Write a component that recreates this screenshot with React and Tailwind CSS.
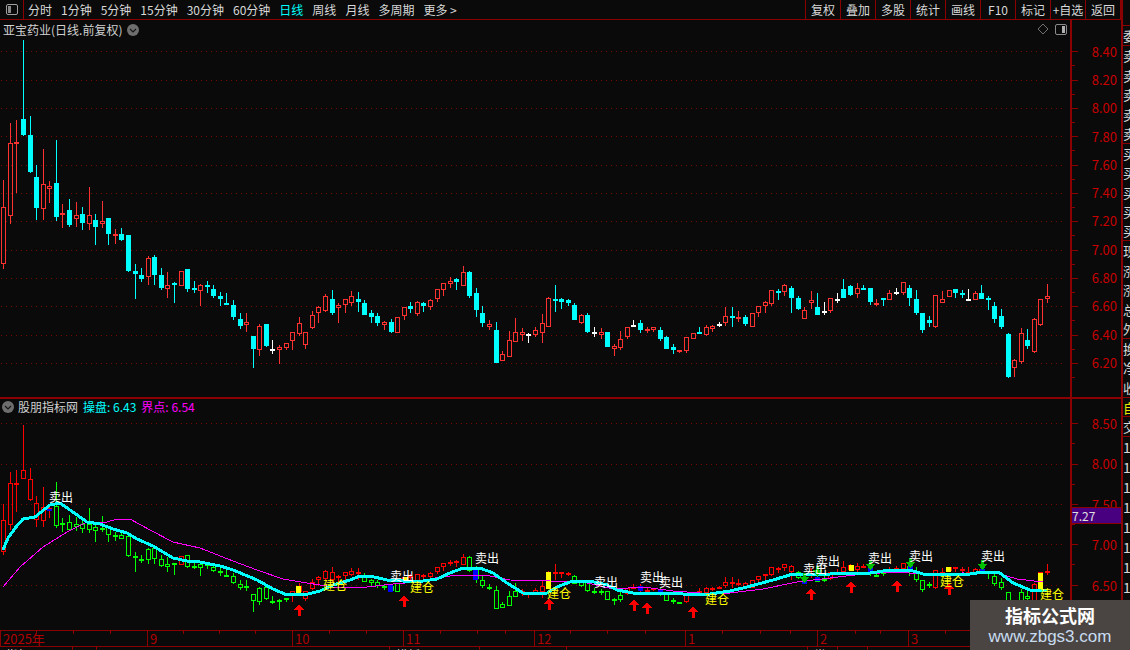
import React from 'react';

const CJK = { fontFamily: '"Noto Sans CJK SC", "Liberation Sans", sans-serif' };

// [type, bodyTop, bodyBottom, wickTop, wickBottom] in screen pixels, r = up, c = down, w = flat
const K = [
  ['r',207,264,180,269],['r',143,216,123,224],['r',142,144,120,193],['c',119,135,40,136],['c',135,172,116,173],
  ['c',177,208,165,220],['r',184,209,149,220],['r',186,189,181,203],['c',183,217,140,221],['r',213,215,204,228],
  ['c',210,225,199,227],['r',215,219,202,227],['c',214,223,207,230],['r',215,224,187,230],['c',220,227,214,245],
  ['r',221,224,201,228],['c',218,234,218,245],['r',234,235,229,244],['c',234,240,228,241],['c',235,271,235,272],
  ['c',271,274,264,299],['c',275,279,268,282],['r',258,277,256,285],['c',257,275,255,285],['c',275,288,268,290],
  ['r',285,289,272,298],['c',283,285,282,303],['r',271,286,271,286],['c',269,289,269,292],['c',288,289,281,293],
  ['r',285,291,284,306],['c',285,286,281,293],['c',289,296,285,298],['c',296,299,292,306],['c',303,304,293,305],
  ['c',305,317,300,320],['c',319,326,313,329],['r',322,325,313,332],['c',336,349,336,368],['r',326,350,324,356],
  ['c',324,346,324,347],['w',349,350,340,354],['r',347,350,345,364],['r',343,348,343,350],['r',332,341,332,350],
  ['r',323,334,317,336],['r',332,345,332,349],['r',315,328,311,329],['r',307,313,306,323],['r',296,311,294,312],
  ['c',299,313,290,315],['r',305,308,303,323],['r',299,305,299,313],['r',296,303,291,306],['c',299,302,292,312],
  ['c',303,315,300,315],['c',313,317,310,323],['c',316,323,313,326],['r',322,325,321,330],['c',322,332,319,333],
  ['r',317,333,317,333],['r',307,316,307,320],['c',306,309,302,313],['r',302,314,301,316],['c',303,306,302,312],
  ['r',300,307,299,310],['r',289,299,289,302],['r',283,290,283,296],['r',281,284,277,288],['c',279,282,278,290],
  ['r',272,286,266,286],['c',272,296,271,298],['c',293,310,288,317],['c',313,323,306,327],['r',324,327,320,330],
  ['c',330,363,322,363],['r',354,361,351,361],['r',340,357,331,357],['r',332,342,318,342],['r',332,335,328,341],
  ['w',334,335,333,343],['r',330,335,327,337],['r',323,333,314,343],['r',298,327,297,327],['c',299,300,285,312],
  ['c',299,302,298,309],['c',300,303,299,306],['c',305,320,303,320],['r',315,323,314,324],['c',315,332,313,333],
  ['w',332,333,327,337],['r',332,335,328,339],['c',332,347,332,347],['r',346,349,344,356],['r',339,348,331,350],
  ['r',327,337,327,339],['w',325,326,320,327],['c',323,330,320,333],['r',329,330,327,333],['r',327,330,327,332],
  ['c',330,339,327,341],['c',337,349,336,349],['c',347,350,344,354],['r',350,351,350,353],['r',337,351,337,353],
  ['r',333,339,333,339],['c',332,333,327,334],['r',327,335,325,336],['r',326,329,325,332],['w',324,325,322,327],
  ['r',316,323,307,326],['c',316,317,307,327],['r',317,319,311,322],['c',317,324,315,326],['r',313,327,313,327],
  ['r',306,313,306,317],['r',302,306,301,313],['r',290,304,290,306],['c',291,292,289,300],['r',285,292,284,296],
  ['c',288,298,286,313],['c',298,309,296,310],['r',310,319,307,319],['r',300,303,291,309],['c',307,315,293,315],
  ['w',311,312,302,315],['r',298,311,298,313],['w',299,300,293,303],['c',289,298,279,298],['c',286,295,285,296],
  ['r',288,294,283,298],['c',288,290,285,290],['c',288,302,288,305],['r',303,305,299,306],['c',298,299,298,306],
  ['r',293,300,290,300],['w',292,293,288,295],['r',282,293,282,295],['c',288,298,285,306],['c',299,313,290,315],
  ['c',313,330,313,333],['c',320,323,316,327],['r',295,327,295,328],['r',299,303,291,303],['r',290,297,290,297],
  ['c',289,293,289,298],['c',293,295,290,298],['w',299,300,289,300],['r',293,300,291,300],['c',293,299,285,299],
  ['c',298,300,296,310],['c',306,319,302,323],['c',316,327,309,329],['c',334,377,333,378],['r',360,368,359,377],
  ['r',333,362,328,364],['c',340,346,329,349],['r',319,352,318,353],['r',299,325,299,326],['r',296,299,284,303],
];

const OP_LINE = [[3,550],[8,538],[16,527],[23,519],[35,517],[50,505],[60,503],[70,510],[87,522],[100,524],[113,529],[127,533],[137,539],[153,546],[173,558],[187,561],[200,562],[220,566],[233,570],[257,580],[273,589],[287,595],[308,594],[320,591],[333,585],[350,580],[360,576],[370,576],[387,580],[403,581],[423,581],[437,579],[450,573],[463,568],[480,568],[493,573],[507,583],[523,593],[547,593],[557,587],[570,582],[590,581],[607,585],[617,590],[633,593],[660,593],[683,594],[703,595],[730,591],[747,587],[773,580],[793,574],[830,574],[870,573],[890,570],[910,570],[923,574],[970,574],[983,572],[1000,573],[1013,583],[1030,590],[1047,591]];
const JD_LINE = [[3,587],[20,567],[43,547],[67,532],[87,522],[107,522],[117,519],[130,519],[150,530],[173,542],[200,548],[233,561],[257,570],[283,579],[307,583],[333,587],[350,587],[367,587],[393,584],[417,582],[440,577],[460,575],[490,576],[510,580],[550,581],[583,582],[613,589],[643,587],[673,591],[700,593],[730,593],[763,589],[797,582],[830,578],[863,574],[897,572],[920,574],[963,573],[1000,574],[1017,579],[1043,582]];

const SELL = [[61,497],[402,576],[487,558],[606,582],[652,577],[671,582],[815,569],[828,561],[880,558],[921,556],[993,556]];
const BUY = [[335,585],[422,587],[559,593],[717,599],[952,581],[1052,594]];
const UP_ARROWS = [[299,610],[404,601],[549,604],[634,605],[647,608],[693,612],[811,594],[851,587],[897,586],[949,589]];
const DOWN_ARROWS = [[804,578],[817,571],[870,565],[910,563],[982,565]];
const YELLOW = [[296,586,5,8],[546,572,5,17],[403,577,5,4],[849,565,5,6],[946,567,5,5],[1038,573,5,17],[895,569,5,2]];
const BLUE = [[388,585,5,7],[473,569,5,11],[638,586,5,5],[658,590,5,5],[47,509,5,2],[802,579,5,5],[815,577,5,4],[868,566,5,6],[908,566,5,4],[980,569,5,2]];

const TOP_GRID = [51.5,80,108,136,165,193,221,250,278,306,335,363];
const LOW_GRID = [423,464,504,544,585];
const TOP_LABELS = ['8.40','8.20','8.00','7.80','7.60','7.40','7.20','7.00','6.80','6.60','6.40','6.20'];
const LOW_LABELS = ['8.50','8.00','7.50','7.00','6.50'];

const TOOLS = ['1分钟','5分钟','15分钟','30分钟','60分钟'];
const TOOLS2 = ['周线','月线','多周期'];
const BUTTONS = ['复权','叠加','多股','统计','画线','F10','标记','+自选','返回'];
const TIME = [['2025年',147],['9',145],['10',111],['11',131],['12',151],['1',132],['2',91],['3',213]];
const MINOR = [36,73,110,183,219,255,329,366,440,477,505,570,607,645,722,760,790,855,880,945,980,1015,1050];
const SIDE = ['卖','卖','卖','卖','卖','买','买','买','买','买','现','涨','涨','总','外','换','净','收'];

const px = (n) => Math.round(3.3 + 6.564 * n);
const lowY = (y) => Math.round(431.1 + (y - 51.5) * 0.5712);
const lineAt = (x) => {
  for (let i = 1; i < OP_LINE.length; i++) {
    const [x0, y0] = OP_LINE[i - 1];
    const [x1, y1] = OP_LINE[i];
    if (x <= x1) return y0 + ((x - x0) / (x1 - x0)) * (y1 - y0);
  }
  return 591;
};
const points = (list) => list.map((p) => p.join(',')).join(' ');

const Candle = ({ x, top, bot, hi, lo, color, solid }) => {
  const h = bot - top;
  return (
    <g>
      <rect x={x} y={hi} width="1" height={Math.max(top - hi, 0)} fill={color} />
      <rect x={x} y={bot} width="1" height={Math.max(lo - bot, 0)} fill={color} />
      {solid || h <= 2 ? (
        <rect x={x - 2} y={top} width="5" height={Math.max(h, 2)} fill={color} />
      ) : (
        <rect x={x - 1.5} y={top + 0.5} width="4" height={h - 1} fill="none" stroke={color} />
      )}
    </g>
  );
};

const PriceCandles = () =>
  K.map(([t, a, b, hi, lo], i) => (
    <Candle
      key={i}
      x={px(i)}
      top={a}
      bot={b}
      hi={hi}
      lo={lo}
      solid={t === 'c' || t === 'w'}
      color={t === 'r' ? '#ff3232' : t === 'c' ? '#00ffff' : '#ffffff'}
    />
  ));

const IndicatorCandles = () =>
  K.map(([t, a, b, hi, lo], i) => {
    const close = lowY(t === 'c' ? b : a);
    return (
      <Candle
        key={i}
        x={px(i)}
        top={lowY(a)}
        bot={lowY(b)}
        hi={lowY(hi)}
        lo={lowY(lo)}
        color={i < 8 || close < lineAt(px(i)) ? '#ff0000' : '#00ff00'}
      />
    );
  });

const Grid = ({ rows }) =>
  rows.map((y) => (
    <line key={y} x1="1" x2="1066" y1={Math.floor(y) + 0.5} y2={Math.floor(y) + 0.5} stroke="#7a0000" strokeDasharray="1 4" />
  ));

const ChevronDot = () => (
  <svg width="12" height="12" viewBox="0 0 12 12" className="shrink-0">
    <circle cx="6" cy="6" r="6" fill="#6e6e6e" />
    <path d="M3 5l3 3 3-3" fill="none" stroke="#161616" strokeWidth="1.2" />
  </svg>
);

const PanelIcon = () => (
  <svg width="12" height="11" viewBox="0 0 12 11">
    <rect x="0.5" y="0.5" width="11" height="10" rx="1.5" fill="none" stroke="#8a8a8a" />
    <rect x="7" y="2" width="3" height="7" fill="#b0b0b0" />
  </svg>
);

// axis labels sit in flow, one row per grid step
const Axis = ({ labels, step, pad }) => (
  <div className="flex flex-col items-end pr-[4px] text-[13px] text-[#c80000]" style={{ paddingTop: pad }}>
    {labels.map((l) => (
      <div key={l} className="flex items-center leading-none" style={{ height: step }}>{l}</div>
    ))}
  </div>
);

const AxisTicks = ({ rows, offset, height, step }) => (
  <svg className="absolute left-0 top-0" width="8" height={height}>
    {rows.map((y) => (
      <g key={y}>
        <rect x="0" y={Math.floor(y - offset)} width="6" height="1" fill="#8b0000" />
        <rect x="0" y={Math.floor(y - offset + step / 2)} width="3" height="1" fill="#8b0000" />
      </g>
    ))}
  </svg>
);

const App = () => (
  <div className="flex h-[650px] w-[1130px] overflow-hidden bg-[#0a0a0a]" style={CJK}>
    <div className="flex w-[1121px] shrink-0 flex-col">
      {/* Toolbar */}
      <div className="flex h-[20px] shrink-0 items-center border-b border-[#8b0000] text-[12px] text-[#d8d8d8]">
        <div className="flex h-full w-[24px] items-center justify-center border-r border-[#8b0000]">
          <svg width="12" height="11" viewBox="0 0 12 11">
            <rect x="0.5" y="0.5" width="11" height="10" rx="1.5" fill="none" stroke="#a0a0a0" />
            <rect x="2" y="2" width="3" height="7" fill="#8a8a8a" />
          </svg>
        </div>
        <div className="ml-[4px] flex items-center gap-[9px]">
          <span>分时</span>
          {TOOLS.map((t) => <span key={t}>{t}</span>)}
          <span className="text-[#00ffff]">日线</span>
          {TOOLS2.map((t) => <span key={t}>{t}</span>)}
          <span>更多 &gt;</span>
        </div>
        <div className="ml-auto flex h-full items-stretch">
          {BUTTONS.map((b) => (
            <div key={b} className="flex w-[35px] items-center justify-center border-l border-[#8b0000]">{b}</div>
          ))}
          <div className="w-px bg-[#8b0000]" />
        </div>
      </div>

      {/* Price panel */}
      <div className="flex h-[377px] shrink-0">
        <div className="relative w-[1070px] shrink-0">
          <svg width="1070" height="377" viewBox="0 20 1070 377" shapeRendering="crispEdges" className="block">
            <Grid rows={TOP_GRID} />
            <PriceCandles />
          </svg>
          <div className="absolute left-[3px] top-0 flex h-[19px] items-center gap-[5px] text-[12px] text-[#d0d0d0]">
            <span>亚宝药业(日线.前复权)</span>
            <ChevronDot />
          </div>
          <div className="absolute right-[3px] top-[3px] flex items-center gap-[6px]">
            <svg width="12" height="12" viewBox="0 0 12 12">
              <path d="M6 1l5 5-5 5-5-5z" fill="none" stroke="#707070" />
            </svg>
            <PanelIcon />
          </div>
        </div>
        <div className="relative flex-1 border-l-2 border-[#8b0000]">
          <AxisTicks rows={TOP_GRID} offset={20} height={377} step={28.3} />
          <Axis labels={TOP_LABELS} step="28.3px" pad="17px" />
        </div>
      </div>

      {/* Indicator panel */}
      <div className="flex h-[233px] shrink-0 border-t-2 border-[#8b0000]">
        <div className="relative w-[1070px] shrink-0">
          <svg width="1070" height="231" viewBox="0 399 1070 231" shapeRendering="crispEdges" className="block">
            <Grid rows={LOW_GRID} />
            <IndicatorCandles />
            {YELLOW.map(([x, y, w, h]) => <rect key={`${x}${y}`} x={x} y={y} width={w} height={h} fill="#ffff00" />)}
            {BLUE.map(([x, y, w, h]) => <rect key={`${x}${y}`} x={x} y={y} width={w} height={h} fill="#0000ff" />)}
            <polyline points={points(JD_LINE)} fill="none" stroke="#ff00ff" strokeWidth="1" />
            <polyline points={points(OP_LINE)} fill="none" stroke="#00ffff" strokeWidth="3" />
            {UP_ARROWS.map(([x, y]) => (
              <path key={x} d={`M${x} ${y - 6}l5 6h-3.5v6h-3v-6h-3.5z`} fill="#ff0000" />
            ))}
            {DOWN_ARROWS.map(([x, y]) => (
              <path key={x} d={`M${x - 1} ${y - 5}h3v4h3.5l-5 6-5-6h3.5z`} fill="#00c000" />
            ))}
          </svg>
          <div className="absolute left-[2px] top-0 flex h-[16px] items-center text-[12px]">
            <ChevronDot />
            <span className="ml-[4px] text-[#d0d0d0]">股朋指标网</span>
            <span className="ml-[5px] text-[#00ffff]">操盘: 6.43</span>
            <span className="ml-[5px] text-[#ff00ff]">界点: 6.54</span>
          </div>
          {SELL.map(([x, y]) => (
            <span key={x} className="absolute -translate-x-1/2 -translate-y-1/2 whitespace-nowrap text-[12px] leading-none text-white" style={{ left: x, top: y - 399 }}>卖出</span>
          ))}
          {BUY.map(([x, y]) => (
            <span key={x} className="absolute -translate-x-1/2 -translate-y-1/2 whitespace-nowrap text-[12px] leading-none text-[#ffff00]" style={{ left: x, top: y - 399 }}>建仓</span>
          ))}
        </div>
        <div className="relative flex-1 border-l-2 border-[#8b0000]">
          <AxisTicks rows={LOW_GRID} offset={399} height={231} step={40.5} />
          <Axis labels={LOW_LABELS} step="40.5px" pad="4px" />
          <div className="absolute inset-x-0 top-[108px] flex h-[17px] items-center border-y border-[#8b0000] bg-[#480080] text-[12px] text-[#e0e0e0]">7.27</div>
        </div>
      </div>

      {/* Time axis */}
      <div className="relative flex h-[17px] shrink-0 border-y border-[#8b0000] text-[13px] text-[#b00000]">
        {TIME.map(([t, w]) => (
          <div key={t} className="flex items-center border-l border-[#8b0000] pl-[2px] leading-none" style={{ width: w }}>{t}</div>
        ))}
        <svg className="absolute left-0 top-0" width="1121" height="4">
          {MINOR.map((x) => <rect key={x} x={x} y="0" width="1" height="3" fill="#8b0000" />)}
        </svg>
      </div>
      <div className="flex flex-1 overflow-hidden text-[12px] leading-none text-[#d8d8d8]">
        {[[73,'指标'],[24,''],[293,''],[90,'模板'],[87,''],[241,''],[30,'常用'],[30,'']].map(([w, t], i) => (
          <div key={i} className="h-full shrink-0 border-r border-[#8b0000] pl-[6px] pt-[2px]" style={{ width: w }}>{t}</div>
        ))}
      </div>
    </div>

    {/* Clipped quote column */}
    <div className="flex flex-1 flex-col overflow-hidden border-l-2 border-[#8b0000] text-[13px] leading-none text-[#d8d8d8]">
      <div className="h-[25px] shrink-0" />
      <div className="flex h-[21px] shrink-0 items-center border-y border-[#8b0000]">委</div>
      <div className="flex h-[351px] shrink-0 flex-col">
        {SIDE.map((c, i) => (
          <div key={i} className={`flex h-[19.5px] shrink-0 items-center ${i % 5 === 4 && i < 16 ? 'border-b border-[#8b0000]' : ''}`}>{c}</div>
        ))}
      </div>
      <div className="flex h-[20px] shrink-0 items-center border-y border-[#8b0000] text-[#e8e800]">自</div>
      <div className="flex h-[20px] shrink-0 items-center border-b border-[#8b0000]">交</div>
      {[0, 1, 2, 3, 4, 5, 6, 7, 8, 9].map((i) => (
        <div key={i} className="flex h-[20px] shrink-0 items-center text-[14px]">1</div>
      ))}
    </div>

    {/* Watermark */}
    <div className="absolute left-[970px] top-[600px] flex h-[50px] w-[160px] flex-col items-center justify-center bg-[#4a4542]">
      <span className="text-[18px] font-bold leading-[24px] text-white">指标公式网</span>
      <span className="text-[17px] leading-[20px] text-[#c8dcf0]" style={{ fontFamily: '"Liberation Sans", sans-serif' }}>www.zbgs3.com</span>
    </div>
  </div>
);

export default App;
